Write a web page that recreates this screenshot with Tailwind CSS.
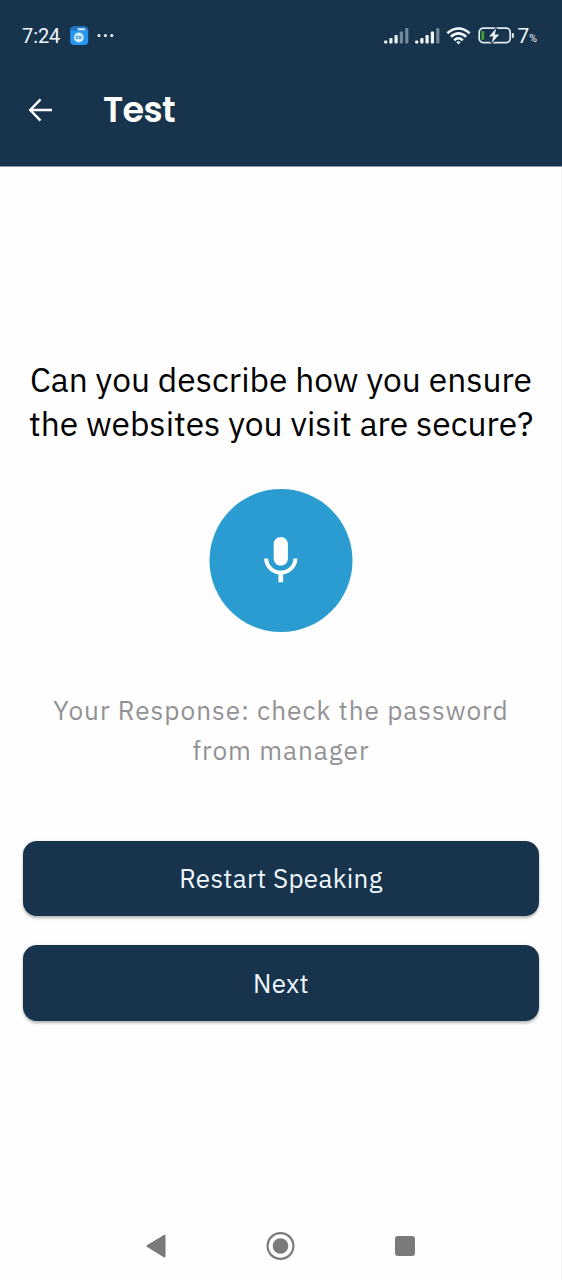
<!DOCTYPE html>
<html lang="en">
<head>
<meta charset="utf-8">
<title>Test</title>
<script src="https://cdn.jsdelivr.net/npm/@tailwindcss/browser@4"></script>
</head>
<body class="h-[1280px] w-[562px] overflow-hidden bg-[#fefefe] [font-family:'IBM_Plex_Sans',Roboto,sans-serif]">
<div class="flex h-full flex-col border-r border-[#f1f1f3]">
  <header class="-mr-px flex h-[166px] shrink-0 flex-col bg-[#18344c] text-[#f0f8ff]">
    <div class="flex h-[72px] items-center pl-[22px] pr-[25px] [font-family:Roboto,sans-serif]">
      <span class="w-[39px] whitespace-nowrap text-[20px] leading-6 tracking-[-0.1px]">7:24</span>
      <svg class="ml-[8px] h-[20px] w-[20px]" viewBox="0 0 20 20">
        <rect x="1.200" y=".5" width="18" height="18.400" rx="4" fill="#2597f3"/>
        <path d="M1.200 4.500Q1.200.5 5 .5H15.500Q19.200.5 19.200 4.500z" fill="#1f74c8"/>
        <path d="M8 2.300H15Q16.500 2.300 16.500 4.300H9.500z" fill="#dff1ff"/>
        <circle cx="9.800" cy="11.500" r="4.900" fill="#d5edff"/>
        <path d="M9.500 10.500Q7.500 9.800 7.300 11.300T9.300 12.500M10 10.300L12.300 12.500M12.600 10.300L10 12.800" fill="none" stroke="#3a8fd8" stroke-width="1.100"/>
      </svg>
      <svg class="ml-[8px] h-[6px] w-[17px]" viewBox="0 0 17 6" fill="#f0f8ff"><circle cx="2" cy="2.500" r="1.500"/><circle cx="8.400" cy="2.500" r="1.500"/><circle cx="14.800" cy="2.500" r="1.500"/></svg>
      <svg class="ml-auto h-[18px] w-[26px]" viewBox="0 0 26 18" fill="#e8f1f8"><rect x=".1" y="13.500" width="3.200" height="3" rx="1"/><rect x="5.300" y="11" width="3.200" height="5.500" rx="1"/><rect x="10.500" y="8" width="3.200" height="8.500" rx="1"/><rect x="15.800" y="4.500" width="3.200" height="12" rx="1" fill="#71899b"/><rect x="21.200" y="1" width="3.200" height="15.500" rx="1" fill="#71899b"/></svg>
      <svg class="ml-[5px] h-[18px] w-[26px]" viewBox="0 0 26 18" fill="#f0f8ff"><rect x=".1" y="13.500" width="3.200" height="3" rx="1"/><rect x="5.300" y="11" width="3.200" height="5.500" rx="1"/><rect x="10.500" y="8" width="3.200" height="8.500" rx="1"/><rect x="15.800" y="4.500" width="3.200" height="12" rx="1"/><rect x="21.200" y="1" width="3.200" height="15.500" rx="1" fill="#71899b"/></svg>
      <svg class="ml-[5px] h-[18px] w-[25px]" viewBox="0 0 25 18" fill="none" stroke="#f0f8ff" stroke-width="2.500"><path d="M1.300 6.200Q12.500-3.200 23.700 6.200"/><path d="M4.800 9.800Q12.500 3 20.200 9.800"/><path d="M8.200 13.200Q12.500 9.400 16.800 13.200"/><path d="M10.300 15Q12.500 13.400 14.700 15L12.500 17.600z" fill="#f0f8ff" stroke="none"/></svg>
      <svg class="ml-[7px] h-[18px] w-[38px]" viewBox="0 0 38 18"><rect x="1.200" y="1.200" width="31" height="14.400" rx="4" fill="none" stroke="#e4ecf3" stroke-width="1.700"/><rect x="3.400" y="3.900" width="2.800" height="9.200" rx="1" fill="#41a32b"/><path d="M18.300 1L11.100 9.600H15.300L13.400 16.200L21.300 7.400H16.900z" fill="#e4ecf3" stroke="#18344c" stroke-width="2.200" paint-order="stroke"/><rect x="33.900" y="6" width="2" height="5" rx="1" fill="#e4ecf3"/></svg>
      <span class="ml-[1px] text-[21px] leading-6">7</span><span class="mt-[5px] text-[10.500px] leading-3">%</span>
    </div>
    <div class="flex h-[75px] items-center pl-[28px]">
      <svg class="h-[24px] w-[25px]" viewBox="0 0 25 24" fill="none" stroke="#fff" stroke-width="2.500"><path d="M12.500 1.300L2.300 12L12.500 22.700M2.300 12H24"/></svg>
      <h1 class="ml-[50px] text-[35px] font-semibold leading-10 tracking-[-0.6px] text-white [font-family:Poppins,Inter,sans-serif]">Test</h1>
    </div>
  </header>
  <main class="-mr-px flex grow flex-col items-center border-t border-[#8c99a4] px-[23px] pt-[191px]">
    <p class="flex flex-col items-center whitespace-nowrap text-[33.500px] leading-[44.300px] text-black"><span>Can you describe how you ensure</span><span>the websites you visit are secure?</span></p>
    <button class="mt-[42px] flex size-[144px] items-center justify-center" aria-label="Record">
      <svg class="size-full" viewBox="0 0 144 144" fill="#fff"><circle cx="72" cy="71.500" r="71.500" fill="#2a9cd2"/><svg x="43.300" y="43.300" width="57" height="57" viewBox="0 0 24 24"><path d="M12 14c1.660 0 2.990-1.340 2.990-3L15 5c0-1.660-1.340-3-3-3S9 3.340 9 5v6c0 1.660 1.340 3 3 3zm5.300-3c0 3-2.540 5.100-5.300 5.100S6.700 14 6.700 11H5c0 3.410 2.720 6.230 6 6.720V21h2v-3.280c3.280-.48 6-3.300 6-6.720h-1.700z"/></svg></svg>
    </button>
    <p class="mt-[57px] flex flex-col items-center whitespace-nowrap text-[26.200px] leading-[40px] text-[#929295]"><span class="tracking-[1px]">Your Response: check the password</span><span class="tracking-[1px]">from manager</span></p>
    <button class="mt-[71px] h-[75.500px] w-full rounded-[14px] bg-[#18344c] pt-px text-[26px] tracking-[0.35px] text-[#f0f8ff] shadow-[0_1.500px_3px_rgba(0,0,0,0.3)]">Restart Speaking</button>
    <button class="mt-[29px] h-[75.500px] w-full rounded-[14px] bg-[#18344c] pt-px text-[26px] tracking-[0.35px] text-[#f0f8ff] shadow-[0_1.500px_3px_rgba(0,0,0,0.3)]">Next</button>
  </main>
  <nav class="flex h-[68px] shrink-0 items-center justify-between pl-[145px] pr-[145px]">
    <svg class="h-[26px] w-[22px]" viewBox="0 0 22 26" fill="#7a7a7a" stroke="#7a7a7a" stroke-linejoin="round" stroke-width="1.600"><path d="M2.200 13L19.700 2.500V23.700z"/></svg>
    <svg class="h-[30px] w-[30px]" viewBox="0 0 30 30"><circle cx="14.500" cy="15" r="12.900" fill="none" stroke="#7a7a7a" stroke-width="2.200"/><circle cx="14.500" cy="15" r="7.800" fill="#7a7a7a"/></svg>
    <svg class="h-[22px] w-[22px]" viewBox="0 0 22 22"><rect x="1" y="1" width="20" height="20" rx="3" fill="#7a7a7a"/></svg>
  </nav>
</div>
</body>
</html>
